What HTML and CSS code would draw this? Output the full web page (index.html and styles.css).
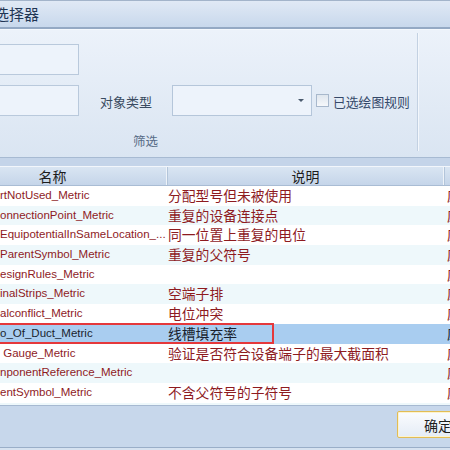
FILE: index.html
```html
<!DOCTYPE html>
<html>
<head>
<meta charset="utf-8">
<link rel="stylesheet" href="styles.css">
</head>
<body>
<div class="win">
  <div class="title">选择器</div>
  <div class="ribbon">
    <div class="group">
      <div class="controls">
        <div class="crow"><div class="input"></div></div>
        <div class="crow">
          <div class="input"></div>
          <span class="lbl">对象类型</span>
          <div class="combo"><span class="arrow"></span></div>
          <span class="chk"></span>
          <span class="chklbl">已选绘图规则</span>
        </div>
      </div>
      <div class="glabel">筛选</div>
    </div>
    <div class="sep"></div>
  </div>
  <div class="splitter"></div>
  <div class="grid">
    <div class="hdr">
      <div class="c1">名称</div>
      <div class="c2">说明</div>
      <div class="c3"></div>
    </div>
    <div class="body">
      <div class="row"><div class="c1">rtNotUsed_Metric</div><div class="c2">分配型号但未被使用</div><div class="c3">应用</div></div>
      <div class="row alt"><div class="c1">onnectionPoint_Metric</div><div class="c2">重复的设备连接点</div><div class="c3">应用</div></div>
      <div class="row"><div class="c1">EquipotentialInSameLocation_...</div><div class="c2">同一位置上重复的电位</div><div class="c3">应用</div></div>
      <div class="row alt"><div class="c1">ParentSymbol_Metric</div><div class="c2">重复的父符号</div><div class="c3">应用</div></div>
      <div class="row"><div class="c1">esignRules_Metric</div><div class="c2"></div><div class="c3">应用</div></div>
      <div class="row alt"><div class="c1">inalStrips_Metric</div><div class="c2">空端子排</div><div class="c3">应用</div></div>
      <div class="row"><div class="c1">alconflict_Metric</div><div class="c2">电位冲突</div><div class="c3">应用</div></div>
      <div class="row sel"><div class="c1">o_Of_Duct_Metric</div><div class="c2">线槽填充率</div><div class="c3">应用</div></div>
      <div class="row"><div class="c1">&nbsp;Gauge_Metric</div><div class="c2">验证是否符合设备端子的最大截面积</div><div class="c3">应用</div></div>
      <div class="row alt"><div class="c1">nponentReference_Metric</div><div class="c2"></div><div class="c3">应用</div></div>
      <div class="row"><div class="c1">entSymbol_Metric</div><div class="c2">不含父符号的子符号</div><div class="c3">应用</div></div>
      <div class="row alt"><div class="c1">ntStrip_Metric</div><div class="c2">未使用的端子排</div><div class="c3">应用</div></div>
    </div>
  </div>
  <div class="footer"><button class="ok">确定</button></div>
</div>
</body>
</html>
```
FILE: styles.css
```css
html, body {
  margin: 0;
  padding: 0;
}
body {
  width: 450px;
  height: 450px;
  overflow: hidden;
  background: #d6e2f0;
  font-family: "Liberation Sans", "Noto Sans CJK SC", sans-serif;
}
.win {
  width: 450px;
  display: flex;
  flex-direction: column;
}
.title {
  height: 26px;
  border-top: 1px solid #a3b4ca;
  border-bottom: 2px solid #94a9c4;
  background: linear-gradient(#e0e9f5, #c8d8ec);
  font-family: "Noto Sans CJK SC", sans-serif;
  font-size: 15px;
  line-height: 26px;
  color: #1f3553;
  text-indent: -6px;
  white-space: nowrap;
}
.ribbon {
  height: 127px;
  border-top: 1px solid #f4f8fd;
  background: linear-gradient(#ecf2fa, #dae5f2);
  display: flex;
}
.group {
  width: 417px;
  display: flex;
  flex-direction: column;
}
.controls {
  padding-top: 14px;
  display: flex;
  flex-direction: column;
  gap: 11px;
}
.crow {
  height: 30px;
  display: flex;
  align-items: center;
}
.input {
  width: 82px;
  height: 31px;
  margin-left: -3px;
  border: 1px solid #b9c9dc;
  background: #edf3fb;
  box-sizing: border-box;
  flex: none;
}
.lbl {
  margin-left: 21px;
  font-family: "Noto Sans CJK SC", sans-serif;
  font-size: 13px;
  color: #394a60;
  padding-top: 2px;
}
.combo {
  margin-left: 20px;
  width: 140px;
  height: 31px;
  box-sizing: border-box;
  border: 1px solid #b5c6da;
  background: #edf3fb;
  position: relative;
  flex: none;
}
.arrow {
  position: absolute;
  right: 7px;
  top: 13px;
  width: 0;
  height: 0;
  border-left: 3px solid transparent;
  border-right: 3px solid transparent;
  border-top: 3px solid #4a5a6e;
}
.chk {
  margin-left: 4px;
  width: 11px;
  height: 11px;
  border: 1px solid #a8b8cc;
  background: linear-gradient(#dfe6ee, #f6f8fb);
  flex: none;
}
.chklbl {
  margin-left: 4px;
  font-family: "Noto Sans CJK SC", sans-serif;
  font-size: 12.8px;
  color: #35496a;
  padding-top: 2px;
  white-space: nowrap;
}
.glabel {
  margin-top: 18px;
  margin-left: 133px;
  font-family: "Noto Sans CJK SC", sans-serif;
  font-size: 12.5px;
  line-height: 16px;
  color: #566b86;
}
.sep {
  width: 1px;
  margin-top: 3px;
  height: 118px;
  background: #c3d1e2;
  border-right: 1px solid #f3f7fc;
}
.splitter {
  height: 8px;
  border-top: 1px solid #a7bad2;
  border-bottom: 1px solid #f2f6fb;
  background: #c4d4e9;
}
.grid {
  display: flex;
  flex-direction: column;
}
.hdr {
  height: 18px;
  border-bottom: 1px solid #a9bcd4;
  background: linear-gradient(#d9e5f2, #c5d5e9);
  display: flex;
  font-family: "Noto Sans CJK SC", sans-serif;
  font-size: 14px;
  line-height: 18px;
  color: #1c1c1c;
}
.hdr .c1, .hdr .c2 {
  text-align: center;
  border-right: 1px solid #eef3f9;
  box-shadow: 1px 0 0 #b3c5da;
}
.hdr .c1 {
  padding-right: 61px;
}
.c1 {
  width: 167px;
  flex: none;
  box-sizing: border-box;
  overflow: hidden;
  white-space: nowrap;
}
.c2 {
  width: 277px;
  flex: none;
  box-sizing: border-box;
  overflow: hidden;
  white-space: nowrap;
  padding-left: 1px;
}
.c3 {
  flex: 1;
  padding-left: 3px;
  overflow: hidden;
  white-space: nowrap;
}
.body {
  height: 219px;
  overflow: hidden;
  background: #ffffff;
}
.row {
  height: 19.7px;
  display: flex;
  align-items: center;
  font-size: 11.5px;
  line-height: 19.7px;
  color: #8e1b1f;
  background: #ffffff;
  position: relative;
}
.row .c2, .row .c3 {
  font-family: "Noto Sans CJK SC", sans-serif;
  font-size: 13.8px;
}
.row.alt {
  background: #eef8fb;
}
.row.sel {
  background: #a9cdf0;
  color: #1a1f2e;
}
.row.sel::after {
  content: "";
  position: absolute;
  left: -4px;
  top: -1px;
  width: 278px;
  height: 21px;
  box-sizing: border-box;
  border: 2px solid #e5383b;
}
.footer {
  height: 43px;
  border-top: 1px solid #a6b9d1;
  border-bottom: 1px solid #9aaec8;
  background: #c7d7eb;
  padding-left: 397px;
  padding-top: 5px;
  box-sizing: border-box;
}
.ok {
  width: 70px;
  height: 27px;
  border: 1px solid #e2bd55;
  border-radius: 2px;
  background: linear-gradient(#fbfcfe, #e4ecf6);
  box-shadow: inset 0 0 0 1px #fdf3cf;
  font-family: "Noto Sans CJK SC", sans-serif;
  font-size: 14px;
  color: #1d1d1d;
  text-align: left;
  padding: 0 0 0 26px;
  margin: 0;
}
```
